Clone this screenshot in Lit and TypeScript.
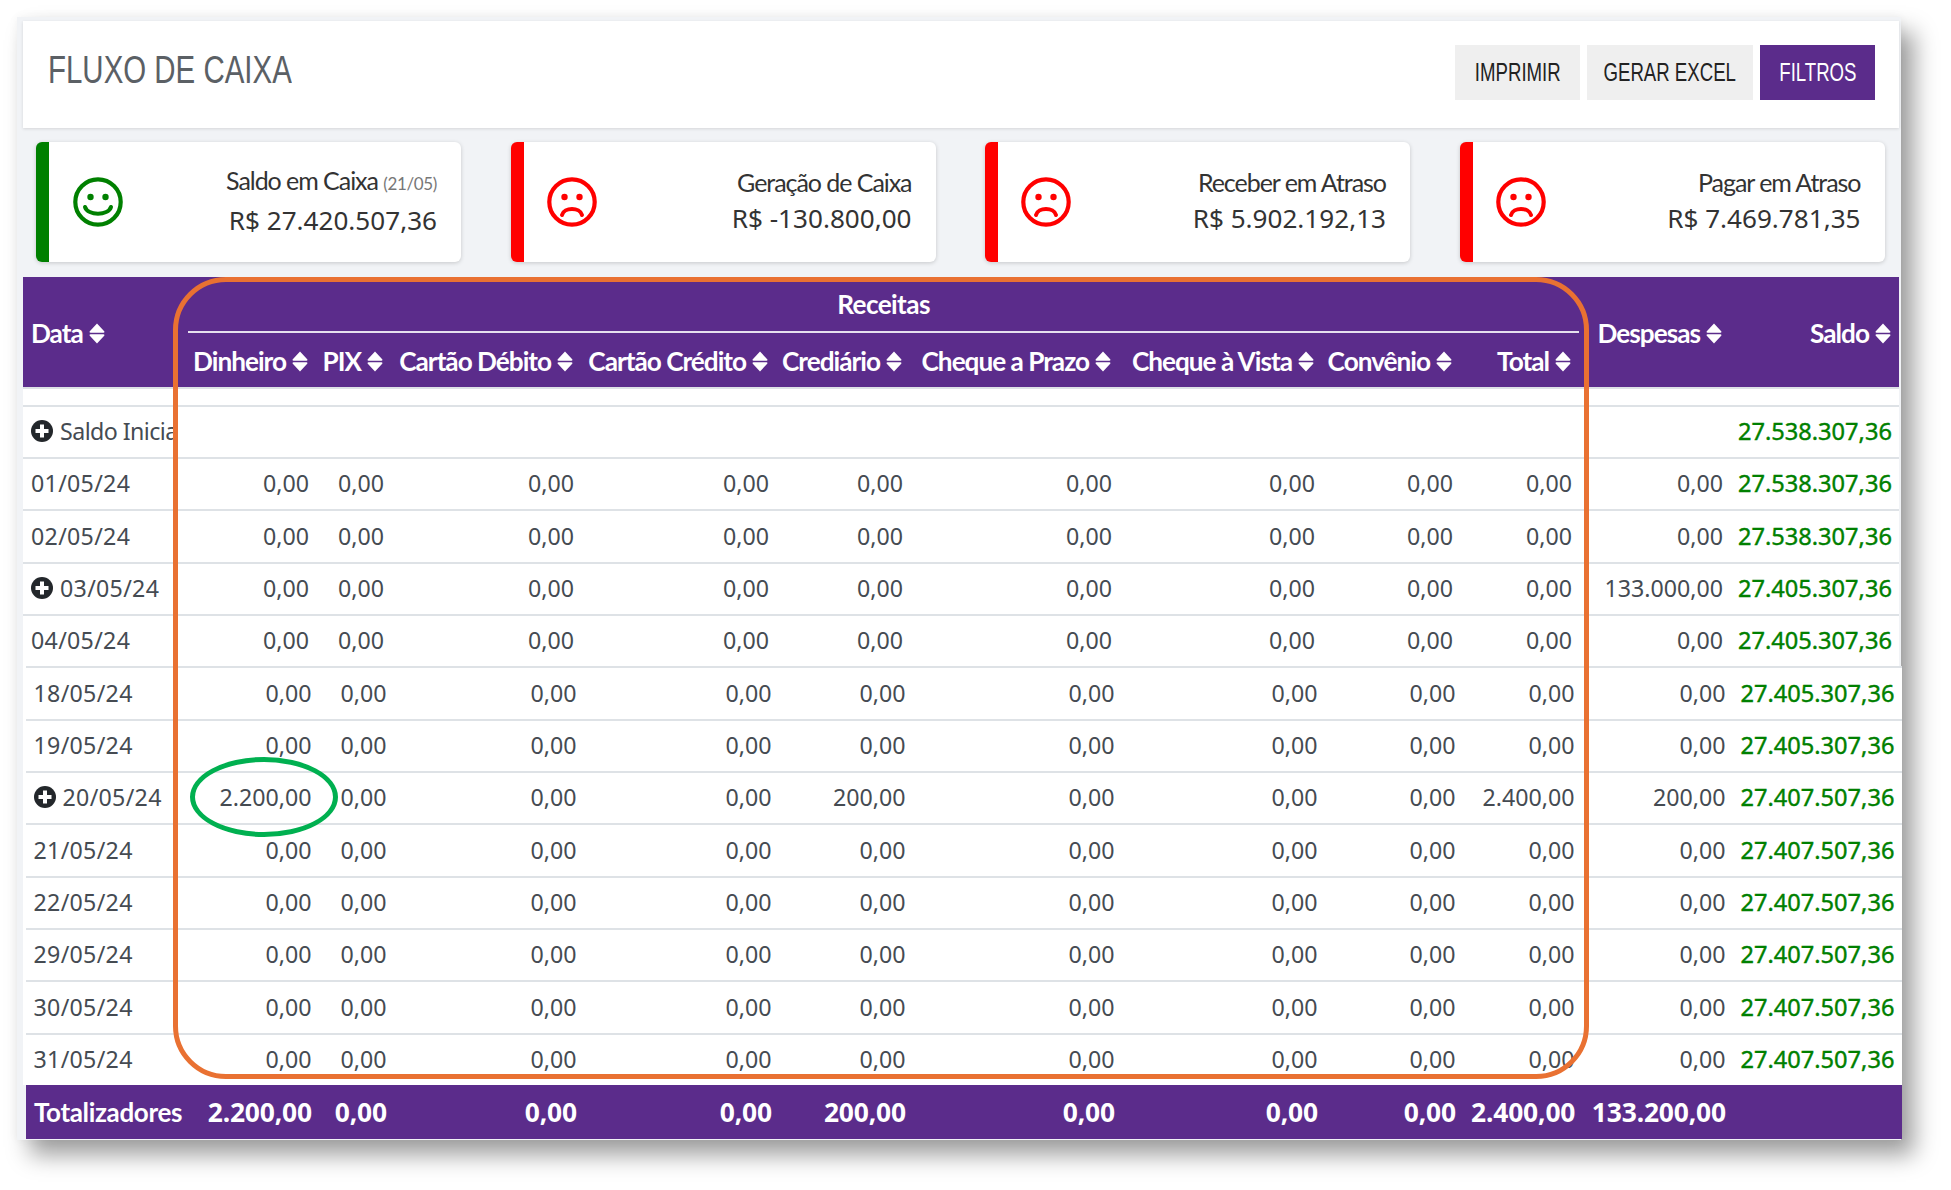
import { LitElement, html, css, svg } from "lit";
import { customElement } from "lit/decorators.js";

type Row = { d: string; vals: string[]; desp: string; saldo: string; plus?: boolean; ring?: boolean };
const Z = "0,00";
const zeros = (over: Record<number, string> = {}) =>
  Array.from({ length: 9 }, (_, i) => over[i] ?? Z);

const upper: Row[] = [
  { d: "01/05/24", vals: zeros(), desp: Z, saldo: "27.538.307,36" },
  { d: "02/05/24", vals: zeros(), desp: Z, saldo: "27.538.307,36" },
  { d: "03/05/24", vals: zeros(), desp: "133.000,00", saldo: "27.405.307,36", plus: true },
  { d: "04/05/24", vals: zeros(), desp: Z, saldo: "27.405.307,36" },
];
const lower: Row[] = [
  { d: "18/05/24", vals: zeros(), desp: Z, saldo: "27.405.307,36" },
  { d: "19/05/24", vals: zeros(), desp: Z, saldo: "27.405.307,36" },
  { d: "20/05/24", vals: zeros({ 0: "2.200,00", 4: "200,00", 8: "2.400,00" }), desp: "200,00", saldo: "27.407.507,36", plus: true },
  { d: "21/05/24", vals: zeros(), desp: Z, saldo: "27.407.507,36" },
  { d: "22/05/24", vals: zeros(), desp: Z, saldo: "27.407.507,36" },
  { d: "29/05/24", vals: zeros(), desp: Z, saldo: "27.407.507,36" },
  { d: "30/05/24", vals: zeros(), desp: Z, saldo: "27.407.507,36" },
  { d: "31/05/24", vals: zeros(), desp: Z, saldo: "27.407.507,36" },
];
const subHeads = ["Dinheiro", "PIX", "Cartão Débito", "Cartão Crédito", "Crediário", "Cheque a Prazo", "Cheque à Vista", "Convênio", "Total"];
const totals = ["2.200,00", Z, Z, Z, "200,00", Z, Z, Z, "2.400,00"];
const cards = [
  { label: "Saldo em Caixa", note: "(21/05)", value: "R$ 27.420.507,36", good: true },
  { label: "Geração de Caixa", note: "", value: "R$ -130.800,00", good: false },
  { label: "Receber em Atraso", note: "", value: "R$ 5.902.192,13", good: false },
  { label: "Pagar em Atraso", note: "", value: "R$ 7.469.781,35", good: false },
];

const sortIcon = svg`<svg class="sort" viewBox="0 0 16 21" width="16" height="21"><path fill="#fff" d="M8 .5 15.2 8.2c.6.7.2 1.5-.7 1.5H1.5C.6 9.700.2 8.900.8 8.200zM1.500 11.300h13c.9 0 1.300.8.7 1.500L8 20.500.8 12.800c-.6-.7-.2-1.500.7-1.500z"/></svg>`;
const plusIcon = svg`<svg class="plus" viewBox="0 0 22 22" width="22" height="22"><circle cx="11" cy="11" r="11" fill="#23272b"/><path fill="#fff" d="M9 4.500h4V9h4.500v4H13v4.500H9V13H4.500V9H9z"/></svg>`;
const face = (good: boolean) => {
  const c = good ? "#008000" : "#ff0000";
  return svg`<svg class="face" viewBox="0 0 50 50" width="50" height="50">
    <circle cx="25" cy="25" r="22.700" fill="none" stroke="${c}" stroke-width="4.200"/>
    <circle cx="17.500" cy="20" r="3.200" fill="${c}"/><circle cx="32.500" cy="20" r="3.200" fill="${c}"/>
    ${good
      ? svg`<path d="M12 30c3 9 23 9 26 0" fill="none" stroke="${c}" stroke-width="4" stroke-linecap="round"/>`
      : svg`<path d="M15 38c2-8 18-8 20 0" fill="none" stroke="${c}" stroke-width="4" stroke-linecap="round"/>`}
  </svg>`;
};

@customElement("app-root")
export class AppRoot extends LitElement {
  static styles = css`
    :host { display: block; width: 1951px; height: 1190px; background: #fff; overflow: hidden;
      font-family: "Noto Sans", "Open Sans", sans-serif; color: #454b52;
      --cols: 165px 128px 75px 190px 195px 134px 209px 203px 138px 119px 151px 169px; }
    .panel { position: relative; margin: 17px 0 0 17px; width: 1884px; height: 1123px; box-sizing: border-box;
      padding: 4px 0 0 6px; background: #f1f3f6;
      box-shadow: 13px 15px 22px rgba(0,0,0,.38), 0 0 9px rgba(0,0,0,.05); }
    .top { height: 107px; width: 1876px; background: #fff; display: flex; align-items: center; justify-content: space-between;
      padding: 0 24px 0 25px; box-sizing: border-box; box-shadow: 0 1px 3px rgba(0,0,0,.12); }
    h1 { margin: 0 0 9px; font: 400 39px "Liberation Sans", sans-serif; color: #5b6065; white-space: nowrap;
      transform: scaleX(.755); transform-origin: left center; }
    .btns { display: flex; gap: 7px; margin-top: -4px; }
    .btn { height: 55px; display: flex; align-items: center; justify-content: center; background: #efefef; color: #222;
      font: 400 25.500px "Liberation Sans", sans-serif; box-sizing: border-box; white-space: nowrap; overflow: hidden; }
    .btn span { display: block; transform: scaleX(.73); flex: none; }
    .btn.p { background: #5b2c8b; color: #fff; }
    .b1 { width: 125px; } .b2 { width: 166px; } .b3 { width: 115px; }
    .cards { display: flex; gap: 49.500px; padding: 14px 0 0 13px; }
    .card { width: 425px; height: 120px; box-sizing: border-box; background: #fff; border-left: 13px solid; border-radius: 6px;
      display: flex; align-items: center; justify-content: space-between; padding: 0 24px 0 24px;
      box-shadow: 0 1px 4px rgba(0,0,0,.18); }
    .card.r { padding-left: 23px; }
    .card.g { border-color: #008000; } .card.r { border-color: #ff0000; }
    .card .txt { text-align: right; margin-bottom: 5px; }
    .label { font: 400 25px/36px "Lato", sans-serif; color: #333; letter-spacing: -1.050px; }
    .note { font-size: 17px; color: #777; letter-spacing: -.35px; }
    .value { font: 400 26.100px/36px "Noto Sans", sans-serif; color: #333; }
    .head { margin-top: 15px; width: 1876px; height: 110px; background: #5b2c8b; display: grid; grid-template-columns: var(--cols);
      grid-template-rows: 56px 54px; color: #fff; font: 700 26.200px "Lato", sans-serif; letter-spacing: -1px; border-bottom: 2px solid #dee2e6; box-sizing: content-box; }
    .h { display: flex; align-items: center; justify-content: flex-end; gap: 6px; padding: 2px 8px 0; white-space: nowrap; }
    .h.span { grid-row: 1 / 3; }
    .h.left { justify-content: flex-start; }
    .rec { grid-column: 2 / 11; justify-content: center; padding: 0; border-bottom: 2px solid #e6e0ee; letter-spacing: -.6px; }
    .sort { flex: none; display: block; }
    .body { background: #fff; width: 1876px; padding-top: 15.500px; }
    .row { display: grid; grid-template-columns: var(--cols); height: 52.350px; box-sizing: border-box; border-top: 2.500px solid #dee2e6;
      background: #fff; font-size: 23.200px; align-items: center; width: 1876px; padding-bottom: 1.500px; }
    .lower { margin-left: 2.500px; }
    .c { text-align: right; padding: 0 7px 0 8px; white-space: nowrap; }
    .c.first { text-align: left; display: flex; align-items: center; gap: 7px; letter-spacing: .3px; }
    .clip { display: block; width: 114px; overflow: hidden; letter-spacing: -.55px; }
    .c.green { color: #008000; font-size: 23.600px; padding-right: 8px; -webkit-text-stroke: .4px #008000; }
    .plus { flex: none; display: block; }
    .foot { display: grid; grid-template-columns: var(--cols); height: 54px; width: 1876px; margin-left: 3px; background: #5b2c8b; color: #fff;
      align-items: center; font: 700 26.400px "Noto Sans", sans-serif; letter-spacing: -.15px; padding-top: 1px; box-sizing: border-box; }
    .foot .c.t { font-family: "Lato", sans-serif; font-size: 26px; letter-spacing: -.35px; }
    .box { position: absolute; left: 156px; top: 260px; width: 1416px; height: 802px; box-sizing: border-box;
      border: 5.500px solid #e97132; border-radius: 53px; pointer-events: none; }
    .ring { position: absolute; left: 173px; top: 740px; width: 148px; height: 80px; box-sizing: border-box;
      border: 5px solid #00b050; border-radius: 50%; pointer-events: none; }
  `;

  private row(r: Row, cls = "") {
    return html`<div class="row ${cls}">
      <div class="c first">${r.plus ? plusIcon : ""}<span>${r.d}</span></div>
      ${r.vals.map((v) => html`<div class="c">${v}</div>`)}
      <div class="c">${r.desp}</div>
      <div class="c green">${r.saldo}</div>
    </div>`;
  }

  render() {
    return html`<div class="panel">
      <div class="top">
        <h1>FLUXO DE CAIXA</h1>
        <div class="btns">
          <div class="btn b1"><span>IMPRIMIR</span></div><div class="btn b2"><span>GERAR EXCEL</span></div><div class="btn b3 p"><span>FILTROS</span></div>
        </div>
      </div>
      <div class="cards">
        ${cards.map((c) => html`<div class="card ${c.good ? "g" : "r"}">
          ${face(c.good)}
          <div class="txt">
            <div class="label">${c.label}${c.note ? html` <span class="note">${c.note}</span>` : ""}</div>
            <div class="value">${c.value}</div>
          </div>
        </div>`)}
      </div>
      <div class="head">
        <div class="h span left">Data${sortIcon}</div>
        <div class="h rec">Receitas</div>
        <div class="h span" style="grid-column:11;grid-row:1/3">Despesas${sortIcon}</div>
        <div class="h span" style="grid-column:12;grid-row:1/3">Saldo${sortIcon}</div>
        ${subHeads.map((s, i) => html`<div class="h" style="grid-column:${i + 2};grid-row:2">${s}${sortIcon}</div>`)}
      </div>
      <div class="body">
        <div class="row">
          <div class="c first">${plusIcon}<span class="clip">Saldo Inicial</span></div>
          <div class="c green" style="grid-column:12">27.538.307,36</div>
        </div>
        ${upper.map((r) => this.row(r))}
        ${lower.map((r) => this.row(r, "lower"))}
      </div>
      <div class="foot">
        <div class="c first t">Totalizadores</div>
        ${totals.map((v) => html`<div class="c">${v}</div>`)}
        <div class="c">133.200,00</div>
        <div class="c"></div>
      </div>
      <div class="box"></div>
      <div class="ring"></div>
    </div>`;
  }
}
